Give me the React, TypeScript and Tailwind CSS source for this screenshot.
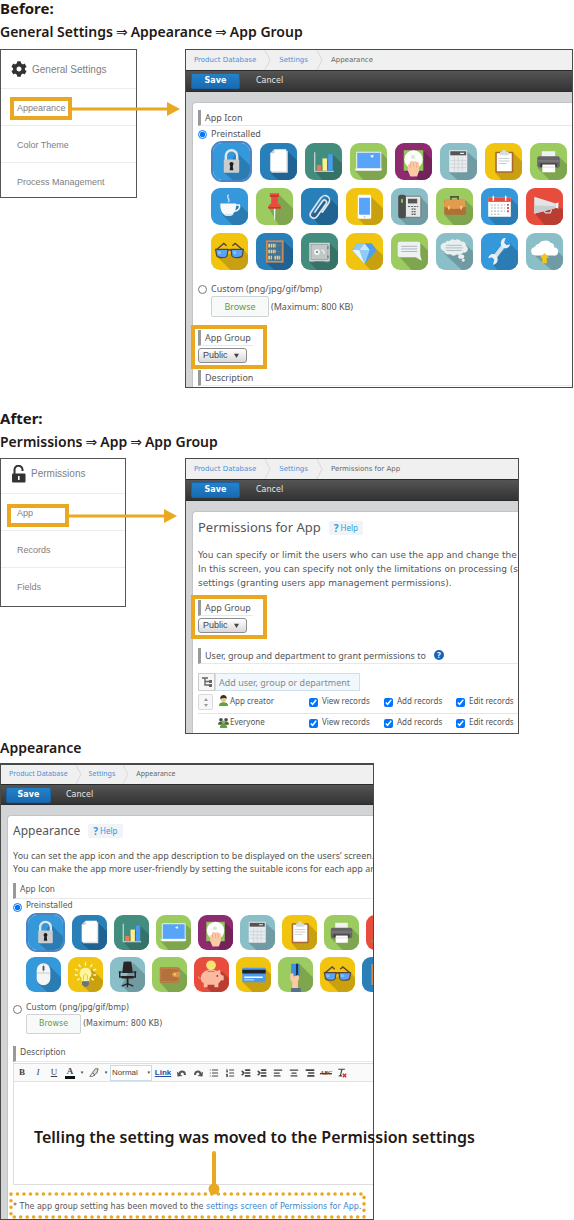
import type { ReactNode } from "react";
import {
  AlignCenter,
  AlignLeft,
  AlignRight,
  IndentDecrease,
  IndentIncrease,
  List,
  ListOrdered,
} from "lucide-react";
import { FaCog } from "react-icons/fa";

type Tile = { bg: string; shade: string; shadow: string; art: ReactNode };

const BLUE = { bg: "#3498db", shade: "#2b7cb3" };
const NAVY = { bg: "#2980b9", shade: "#206392" };
const TEAL = { bg: "#438d7e", shade: "#377268" };
const GREEN = { bg: "#9ccc60", shade: "#7fa64f" };
const PURPLE = { bg: "#8e2a6e", shade: "#74225a" };
const PALE = { bg: "#8bbfc8", shade: "#719ba2" };
const YELLOW = { bg: "#f1c40f", shade: "#c9a00f" };
const RED = { bg: "#e74c3c", shade: "#bb3d31" };

const TILES: Record<string, Tile> = {
  lock: {
    ...BLUE,
    shadow: "23,9 36,22 36,36 19,36 11,29",
    art: (
      <>
        <path d="M12.500 18v-5.500a5.500 5.500 0 0 1 11 0V18" fill="none" stroke="#e3e6e8" strokeWidth="2.400" />
        <rect x="10.500" y="16" width="15" height="13" rx="1" fill="#c9cdd0" />
        <circle cx="18" cy="20.500" r="2" fill="#1d1d1d" />
        <path d="M17 21h2l.8 5.500h-3.600z" fill="#1d1d1d" />
      </>
    ),
  },
  file: {
    ...NAVY,
    shadow: "26,7 36,17 36,36 18,36 10,29",
    art: (
      <>
        <path d="M13.500 7.500H27V29H11z" fill="#dfe3e6" />
        <path d="M14 6h11.500v21.500H10V10z" fill="#fff" />
        <path d="M14 6v4h-4z" fill="#c5ccd1" />
      </>
    ),
  },
  chart: {
    ...TEAL,
    shadow: "27,11 36,20 36,36 17,36 10,28",
    art: (
      <>
        <path d="M9.500 9v18.500H28" fill="none" stroke="#dfe9e7" />
        <rect x="11.500" y="21.500" width="4.500" height="5.500" fill="#f0785a" />
        <rect x="17" y="15" width="4.500" height="12" fill="#fdf08a" />
        <rect x="22.500" y="11" width="4.500" height="16" fill="#4a9bef" />
      </>
    ),
  },
  laptop: {
    ...GREEN,
    shadow: "30,9 36,15 36,36 13,36 5,27",
    art: (
      <>
        <rect x="6" y="8.500" width="24.500" height="17" rx="1" fill="#eef1f2" />
        <rect x="7" y="9.500" width="22.500" height="15" fill="#57a4f8" />
        <path d="M19.500 12.500l3.500-1-1 3z" fill="#fff" />
        <path d="M4.500 25h27l-1.500 2H6z" fill="#fff" />
      </>
    ),
  },
  touch: {
    ...PURPLE,
    shadow: "28,8 36,16 36,36 24,36 9,27",
    art: (
      <>
        <rect x="8.500" y="7" width="19" height="20" fill="#8fc95c" />
        <circle cx="18" cy="16" r="9" fill="#fff" />
        <circle cx="17.500" cy="13.500" r="2" fill="#d9e8d0" />
        <path d="M14.500 18.500q1.700-2.500 3.400 0 2-2 3.400 0 1.800-.8 2.200 1.500V27l-2 5.500h-6.500L12.500 27v-5q0-2 2-1.500z" fill="#fbc9a4" />
        <path d="M15 19v5M18 18.500v5M21 19v5" stroke="#e0a580" strokeWidth=".6" />
      </>
    ),
  },
  calculator: {
    ...PALE,
    shadow: "26,8 36,17 36,36 17,36 9,29",
    art: (
      <>
        <rect x="9" y="7" width="17.500" height="21.500" rx="1" fill="#e9ecee" />
        <rect x="10" y="8" width="15.500" height="4" fill="#555" />
        <path d="M19.500 10h4" stroke="#e9ecee" strokeWidth="1.200" />
        <path d="M14 13.500v14M17.800 13.500v14M21.600 13.500v14M10 17h16M10 20.500h16M10 24h16" stroke="#c9d0d3" strokeWidth=".7" />
      </>
    ),
  },
  clipboard: {
    ...YELLOW,
    shadow: "27,9 36,18 36,36 16,36 10,29",
    art: (
      <>
        <rect x="10" y="8.500" width="17.500" height="20.500" rx="1" fill="#a8672e" />
        <rect x="11.500" y="10" width="14.500" height="17.500" fill="#fff" />
        <path d="M14.500 8.500h2a2 2 0 0 1 4 0h2.500v3.500h-8.500z" fill="#d8dcde" />
        <path d="M13 15h11M13 17.500h11M13 20h8" stroke="#c3c8cc" strokeWidth=".9" />
      </>
    ),
  },
  printer: {
    ...GREEN,
    shadow: "29,14 36,21 36,36 19,36 7,24",
    art: (
      <>
        <rect x="11.500" y="8" width="13" height="6" fill="#f1f1f1" />
        <rect x="7" y="13" width="22" height="11" rx="2" fill="#666" />
        <path d="M7.500 17.500h21" stroke="#8a8a8a" />
        <path d="M10 20h16v3H10z" fill="#333" />
        <path d="M12 21h12.500v7.500H12z" fill="#fff" />
        <path d="M12 23.500h12.500" stroke="#d9d9d9" strokeWidth=".8" />
      </>
    ),
  },
  cup: {
    ...BLUE,
    shadow: "28,16 36,24 36,36 21,36 11,26",
    art: (
      <>
        <path d="M17 6.500q-1.500 2.300 0 4.200t-.5 3" fill="none" stroke="#cfe6f6" strokeWidth="1.200" />
        <path d="M9 15h15.500c0 6-1.500 9.500-4.500 11h-6.500C10.500 24.500 9 21 9 15z" fill="#f7f9fa" />
        <path d="M24 16.500h3.500c1.500 3-1.500 6-5 6" fill="none" stroke="#f0f3f5" strokeWidth="1.600" />
        <path d="M12 25.500h10q-1.500 1.700-3 1.700h-4q-1.500 0-3-1.700z" fill="#dce6ec" />
      </>
    ),
  },
  pin: {
    ...GREEN,
    shadow: "23,7 36,20 36,36 22,36 12,19",
    art: (
      <>
        <path d="M17.300 19h1.600l-.4 12h-.8z" fill="#f3f5f6" />
        <path d="M13.500 5h9v3l-1.300.8v5.700l2.800 3V20H12v-2.500l2.800-3V8.800L13.500 8z" fill="#e74c3c" />
        <path d="M13.500 7h9v1l-1.300.8h-6.400L13.500 8zM12 18.500h12V20H12z" fill="#c0392b" />
      </>
    ),
  },
  paperclip: {
    ...NAVY,
    shadow: "27,9 36,18 36,36 18,36 9,27",
    art: (
      <path
        d="M13.500 23.500l7.300-10.600c1.900-2.700 5.400-.3 3.600 2.400l-8.600 12.200c-3.100 4.300-9 .3-6-4.200l9.400-13.500c4-5.500 11.300-.5 7.500 5.200l-6 8.500"
        fill="none"
        stroke="#dfe5ea"
        strokeWidth="1.600"
        strokeLinecap="round"
      />
    ),
  },
  mobile: {
    ...YELLOW,
    shadow: "24,8 36,20 36,36 18,36 12,30",
    art: (
      <>
        <rect x="11.500" y="6.500" width="13" height="23.500" rx="1.500" fill="#fff" />
        <rect x="12.700" y="9.500" width="10.600" height="16.500" fill="#57a4f8" />
        <circle cx="18" cy="28" r=".9" fill="#c7ccd0" />
      </>
    ),
  },
  phone: {
    ...PALE,
    shadow: "29,9 36,16 36,36 15,36 8,29",
    art: (
      <>
        <rect x="12" y="8" width="17" height="20.500" rx="1" fill="#e6e9ea" stroke="#6b6b6b" strokeWidth=".8" />
        <rect x="7" y="6.500" width="7.500" height="23" rx="2.500" fill="#4d4d4d" />
        <rect x="9.800" y="10.500" width="1.800" height="4" rx=".9" fill="#8bd34e" />
        <rect x="16.500" y="10.500" width="9" height="4.500" fill="#555" />
        <path d="M16.500 18h10" stroke="#666" strokeWidth="1.200" strokeDasharray="2 .8" />
        <path d="M20 20.500h4M20 23h4M20 25.500h4" stroke="#666" strokeWidth="1.300" />
        <path d="M21.900 20v6.500" stroke="#e6e9ea" strokeWidth=".5" />
      </>
    ),
  },
  briefcase: {
    ...GREEN,
    shadow: "29,12 36,19 36,36 17,36 8,26",
    art: (
      <>
        <path d="M14.500 12V8.700h7V12" fill="none" stroke="#5a5040" strokeWidth="1.600" />
        <rect x="8" y="11.500" width="21" height="14.500" rx="1.500" fill="#b06f37" />
        <path d="M8.500 11.500h20l.5 6.500q-5 2.500-10.500 2.500T7.500 18z" fill="#e19c50" />
        <path d="M12.500 17.500v3.500M24.500 17.500v3.500" stroke="#fbd978" strokeWidth="1.500" />
      </>
    ),
  },
  calendar: {
    ...BLUE,
    shadow: "29,10 36,17 36,36 14,36 7,28",
    art: (
      <>
        <rect x="7" y="9.500" width="22" height="18.500" fill="#fff" />
        <rect x="7" y="9.500" width="22" height="4" fill="#e74c3c" />
        <path d="M12 7.500v5M24 7.500v5" stroke="#fff" strokeWidth="1.400" />
        <path d="M9.500 16.500h14M9.500 19.500h14M9.500 22.500h14M9.500 25.500h10" stroke="#c3cdd4" strokeWidth="1.600" strokeDasharray="1.800 1.400" />
        <path d="M26.200 15.500v8.500" stroke="#e74c3c" strokeWidth="1.800" strokeDasharray="1.800 1.300" />
      </>
    ),
  },
  megaphone: {
    ...RED,
    shadow: "32,18 36,21 36,36 18,36 8,24",
    art: (
      <>
        <path d="M8 8.500L29 15v4.500L8 25z" fill="#e2e5e7" />
        <path d="M8 17l21 .5v2L8 25z" fill="#c9ced1" />
        <path d="M29 14.500h1.500l1-1v7l-1-1H29z" fill="#f5f6f7" />
        <path d="M17.500 22.500l1.500 1.700h4.500l1.500-3.400" fill="none" stroke="#d5d9db" strokeWidth="1.200" />
      </>
    ),
  },
  glasses: {
    ...YELLOW,
    shadow: "31,16 36,21 36,36 19,36 7,24",
    art: (
      <>
        <path d="M5 16.500l7.500-6.300 2.700 2.300M31 16.500l-7.500-6.300-2.700 2.300" fill="none" stroke="#5c4433" strokeWidth="1.300" />
        <path d="M4.500 16h12l-.8 6c-1 2.600-8.700 2.600-10.200 0zM19.500 16h12l-1 6c-1.500 2.600-9.200 2.600-10.200 0z" fill="#57a4f8" stroke="#5c4433" strokeWidth="1.200" />
        <path d="M16.500 17q1.500-1.500 3 0" fill="none" stroke="#5c4433" strokeWidth="1.500" />
        <path d="M6.500 18h3v2.500h-2.500zM21.500 18h3v2.500h-2.500z" fill="#8fc4fb" />
      </>
    ),
  },
  abacus: {
    ...NAVY,
    shadow: "27,8 36,16 36,36 18,36 10,29",
    art: (
      <>
        <rect x="10.500" y="8" width="15.500" height="20" fill="#3f7399" stroke="#d08a55" strokeWidth="1.700" />
        <path d="M11.500 12.300h14M11.500 18h14M11.500 24h14" stroke="#a56a3c" strokeWidth=".9" />
        <path d="M12 12.300h7.500M12 18h7.500M12 24h3.500M18 24h5.500" stroke="#f5cf7a" strokeWidth="3.600" strokeDasharray="1.600 .7" />
      </>
    ),
  },
  safe: {
    ...TEAL,
    shadow: "28,10 36,18 36,36 15,36 8,28",
    art: (
      <>
        <path d="M9 27h4v1.500H9zM23 27h4v1.500h-4z" fill="#8b9092" />
        <rect x="8" y="9.500" width="20" height="18" fill="#d0d4d5" />
        <rect x="9.800" y="11.300" width="16.400" height="14.400" fill="#c1c6c7" stroke="#959b9d" strokeWidth=".7" />
        <circle cx="15.500" cy="18.500" r="2.800" fill="#f2f3f3" />
        <path d="M14.800 17.500h1.500v2h-1.500z" fill="#6f7577" />
        <path d="M20 17h1.500l1.500 3.500" fill="none" stroke="#f2f3f3" strokeWidth="1.200" />
        <path d="M26.200 13v2.500M26.200 22v2.500" stroke="#6f7577" strokeWidth="1.200" />
      </>
    ),
  },
  diamond: {
    ...YELLOW,
    shadow: "30,16 36,22 36,36 24,36 18,30",
    art: (
      <>
        <path d="M11 10h14l5 6.500L18.200 30.500 6 16.500z" fill="#4f9fe8" />
        <path d="M11 10h7l-5 6.500H6z" fill="#8cc8f8" />
        <path d="M18 10l5 6.500H13z" fill="#c9e7fd" />
        <path d="M13 16.500h10l-4.800 14z" fill="#8dcdf8" />
        <path d="M6 16.500h7l5.200 14z" fill="#e4f4fe" />
      </>
    ),
  },
  chat: {
    ...GREEN,
    shadow: "29,10 36,17 36,36 20,36 8,23",
    art: (
      <>
        <path d="M8.500 8.500h18a2 2 0 0 1 2 2V22l1.500 5-6-3.500H8.500a2 2 0 0 1-2-2v-11a2 2 0 0 1 2-2z" fill="#eef1f2" />
        <path d="M10 13h15.500M10 15.500h15.500M10 18h15.500" stroke="#aab2b6" strokeWidth=".9" />
      </>
    ),
  },
  thought: {
    ...PALE,
    shadow: "30,12 36,18 36,36 25,36 8,20",
    art: (
      <>
        <path d="M9 9.500a3 3 0 0 1 4-1.500 4 4 0 0 1 5.500-1 4 4 0 0 1 6 1.500 3.500 3.500 0 0 1 4.500 4 3.500 3.500 0 0 1-2.500 6.500 5 5 0 0 1-6 2 6 6 0 0 1-7-.5 4 4 0 0 1-5.500-3 3.500 3.500 0 0 1 1-8z" fill="#e8eff1" />
        <path d="M10 12h15M9 14.500h17M10 17h15" stroke="#a8b7bc" strokeWidth=".9" />
        <ellipse cx="24.500" cy="23" rx="3" ry="2" fill="#e8eff1" />
        <circle cx="26.500" cy="26.500" r="1.400" fill="#e8eff1" />
      </>
    ),
  },
  wrench: {
    ...BLUE,
    shadow: "28,10 36,18 36,36 16,36 11,30",
    art: (
      <>
        <path d="M12.500 24.500L23 11" stroke="#dde1e4" strokeWidth="3.800" />
        <path d="M24 4.500c-4 .5-6 4.500-4 8s7 3.500 8.500-1.500l-3.700.8-2.300-2.300z" fill="#eceff1" />
        <path d="M11.500 31c4-.5 6-4.500 4-8s-7-3.500-8.500 1.500l3.700-.8 2.300 2.300z" fill="#eceff1" />
      </>
    ),
  },
  cloud: {
    ...PALE,
    shadow: "29,16 36,23 36,36 25,36 7,21",
    art: (
      <>
        <path d="M9 22a4.300 4.300 0 0 1-.5-8.500 5 5 0 0 1 4-3 6.500 6.500 0 0 1 5.500-3 6 6 0 0 1 6 2 4.500 4.500 0 0 1 3.500 4.500 4 4 0 0 1-.5 8z" fill="#fff" />
        <path d="M18 19.500l4.500 4.500h-2.300v5.500h-4.400V24h-2.300z" fill="#f5c518" />
      </>
    ),
  },
  mouse: {
    ...BLUE,
    shadow: "24,9 36,21 36,36 22,36 12,27",
    art: (
      <>
        <path d="M11 13.500a7 7 0 0 1 14 0V22a7 7 0 0 1-14 0z" fill="#f3f5f6" />
        <path d="M11 16.500h14M18 6.500v9.500" fill="none" stroke="#b4bdc3" strokeWidth=".7" />
        <rect x="17" y="9" width="2" height="5" rx="1" fill="#555" />
      </>
    ),
  },
  bulb: {
    ...YELLOW,
    shadow: "24,12 36,24 36,36 22,36 15,29",
    art: (
      <>
        <path d="M18 5.500v3.500M11 7.500l2 3M25 7.500l-2 3M7 12.500l3.500 1.500M29 12.500L25.500 14M7 18.500h3M29 18.500h-3M9.500 24l2.500-2M26.500 24L24 22" stroke="#fff6b8" strokeWidth="1.400" />
        <path d="M18 11a6 6 0 0 1 4 10.500V25h-8v-3.500A6 6 0 0 1 18 11z" fill="#fdf7a0" />
        <path d="M16 24v-5l2-1.500 2 1.500v5" fill="none" stroke="#e8b52c" strokeWidth=".8" />
        <path d="M14.500 25h7v3l-2 2.500h-3l-2-2.500z" fill="#6b7379" />
      </>
    ),
  },
  chair: {
    ...PALE,
    shadow: "24,6 36,18 36,36 19,36 12,29",
    art: (
      <>
        <path d="M14 5q4-1 8 0l1.500 11.500h-11z" fill="#2a2525" />
        <path d="M10 15.500v5h16v-5M9 15.500h3M24 15.500h3" fill="none" stroke="#222" strokeWidth="1.500" />
        <path d="M12 19.500h12V22H12zM17.200 22h1.800v6h-1.800z" fill="#222" />
        <path d="M12 30l6-2.500 6 2.500M18 27.500V31" fill="none" stroke="#222" strokeWidth="1.300" />
      </>
    ),
  },
  wallet: {
    ...GREEN,
    shadow: "28,11 36,19 36,36 17,36 8,26",
    art: (
      <>
        <rect x="8" y="10.500" width="20" height="16" rx="1.500" fill="#b5713c" />
        <rect x="9.200" y="11.800" width="17.600" height="13.400" fill="none" stroke="#e0a96f" strokeWidth=".6" strokeDasharray="1 1" />
        <path d="M28.500 15.500H23a2.500 2.500 0 0 0 0 5h5.500z" fill="#d69554" />
        <circle cx="23.500" cy="18" r="1.100" fill="#fbe06a" />
      </>
    ),
  },
  piggy: {
    ...RED,
    shadow: "29,15 36,22 36,36 18,36 10,29",
    art: (
      <>
        <circle cx="17.500" cy="8.500" r="5" fill="#f8e375" />
        <path d="M4.500 19c1 2 1 3 2.500 3 0-6 5-9 10-9 3 0 5 .5 6.500 1.500L27 13v4l2 2h1.500v5H28l-3 3.500V31h-4v-2.500h-7V31h-4v-4c-2-1.500-3-3-3-4.500-2 0-3-1.500-2.500-3.500z" fill="#fbb9a0" />
        <circle cx="24" cy="19.500" r=".9" fill="#7a3d2f" />
        <path d="M14 14.800h7" stroke="#c96d57" />
      </>
    ),
  },
  card: {
    ...YELLOW,
    shadow: "30,12 36,18 36,36 17,36 7,26",
    art: (
      <>
        <rect x="6.500" y="11" width="24" height="15" rx="1" fill="#4a9bef" />
        <path d="M6.500 13h24v4h-24z" fill="#1d2226" />
        <path d="M8.500 20h19v1.500h-19z" fill="#fff" />
        <path d="M8.500 23.500h10" stroke="#d3e7fb" />
      </>
    ),
  },
  pay: {
    ...GREEN,
    shadow: "23,8 36,21 36,36 22,36 14,28",
    art: (
      <>
        <rect x="13.500" y="7" width="9" height="14" fill="#3f8fe0" />
        <path d="M18.500 7h2.200v14h-2.200z" fill="#20324a" />
        <path d="M12.500 17.500l3-1 .8 3.500 4.200-1.500 1.500 2-1.500 5V32h-6v-6l-2-3z" fill="#fbc9a4" />
        <path d="M13.500 32H23.500v4H13.500z" fill="#55708f" />
      </>
    ),
  },
  melon: {
    ...RED,
    shadow: "10,20 36,20 36,36 26,36",
    art: <path d="M5 26l5-3 8 2v3H6z" fill="#6fa04a" />,
  },
};

const GENERAL_ROWS = [
  ["lock", "file", "chart", "laptop", "touch", "calculator", "clipboard", "printer"],
  ["cup", "pin", "paperclip", "mobile", "phone", "briefcase", "calendar", "megaphone"],
  ["glasses", "abacus", "safe", "diamond", "chat", "thought", "wrench", "cloud"],
];

const APPEARANCE_ROWS = [
  ["lock", "file", "chart", "laptop", "touch", "calculator", "clipboard", "printer", "melon"],
  ["mouse", "bulb", "chair", "wallet", "piggy", "card", "pay", "glasses", "abacus"],
];

function TileIcon({ name, compact, selected }: { name: string; compact?: boolean; selected?: boolean }) {
  const tile = TILES[name];
  const size = compact ? "size-[35px]" : "size-[37px]";
  return (
    <button
      aria-label={name}
      className={
        "shrink-0 block overflow-hidden " +
        (selected ? "rounded-[11px] border-2 border-[#4a84c4] " : "rounded-[9px] ")
      }
    >
      <svg viewBox="0 0 36 36" className={size}>
        <rect width="36" height="36" fill={tile.bg} />
        <polygon points={tile.shadow} fill={tile.shade} />
        {tile.art}
      </svg>
    </button>
  );
}

function TileGrid({ rows, compact }: { rows: string[][]; compact?: boolean }) {
  return (
    <div>
      {rows.map((row, i) => (
        <div
          key={i}
          className={
            "flex items-center " +
            (compact ? "gap-[7px] " : "gap-2 ") +
            (i === 1 ? (compact ? "mt-[5px]" : "mt-[6px]") : i > 1 ? "mt-2" : "")
          }
        >
          {row.map((name) => (
            <TileIcon key={name} name={name} compact={compact} selected={name === "lock"} />
          ))}
        </div>
      ))}
    </div>
  );
}

function Chevron() {
  return (
    <svg viewBox="0 0 8 21" preserveAspectRatio="none" className="h-full w-[7px] shrink-0">
      <path d="M1 0l6 10.500L1 21" fill="none" stroke="#d6d6d6" />
    </svg>
  );
}

type WindowProps = { current: string; compact?: boolean; className: string; children: ReactNode };

function AppWindow({ current, compact, className, children }: WindowProps) {
  return (
    <div className={"flex flex-col overflow-hidden border border-[#4a4a4a] bg-[#d3d4d6] whitespace-nowrap text-[#555] " + className}>
      <nav
        className={
          "flex shrink-0 items-center bg-[#f0f0f0] text-[#4a90d9] " +
          (compact
            ? "h-[19px] pl-2 gap-[7px] font-['Noto_Sans',sans-serif] text-[7px]"
            : "h-5 pl-2 gap-2 font-['DejaVu_Sans',sans-serif] text-[7px]")
        }
      >
        <a href="#database">Product Database</a>
        <Chevron />
        <a href="#settings">Settings</a>
        <Chevron />
        <span className="text-[#666]">{current}</span>
      </nav>
      <div
        className={
          "flex shrink-0 items-center border-y border-[#2b2b2b] bg-gradient-to-b from-[#555] to-[#333] pl-[5px] font-['DejaVu_Sans',sans-serif] text-[8px] " +
          (compact ? "h-[21px]" : "h-[22px]")
        }
      >
        <button
          className={
            "h-4 rounded-xs border border-[#1a62a3] bg-gradient-to-b from-[#2482ca] to-[#176bb3] font-bold leading-none text-white " +
            (compact ? "w-[45px]" : "w-[49px]")
          }
        >
          Save
        </button>
        <button className={"leading-none text-[#e8e8e8] " + (compact ? "ml-[15px]" : "ml-4")}>Cancel</button>
      </div>
      <div
        className={
          "ml-[6px] mt-[10px] flex-1 rounded-tl-sm border-l border-t border-[#c3c4c6] bg-white pl-[5px] " +
          (compact
            ? "font-['DejaVu_Sans',sans-serif] text-[8px]"
            : "font-['Noto_Sans',sans-serif] text-[9px]")
        }
      >
        {children}
      </div>
    </div>
  );
}

function FieldTitle({ children, short }: { children: ReactNode; short?: boolean }) {
  return (
    <h4
      className={
        "flex h-4 items-center border-b border-b-[#e8e8e8] border-l-[3px] border-l-[#999] pb-px pl-1 leading-none " +
        (short ? "w-[55px]" : "")
      }
    >
      {children}
    </h4>
  );
}

function HelpLink() {
  return (
    <a
      href="#help"
      className="flex h-[14px] items-center gap-[2px] rounded-xs bg-[#f1f4f6] px-[5px] font-['Noto_Sans',sans-serif] text-[8px] leading-none text-[#3498db]"
    >
      <b className="text-[10px]">?</b>
      Help
    </a>
  );
}

function IconPicker({ rows, compact, name }: { rows: string[][]; compact?: boolean; name: string }) {
  return (
    <>
      <FieldTitle>App Icon</FieldTitle>
      <label className={"flex items-center gap-1 leading-none " + (compact ? "h-[14px]" : "h-[15px]")}>
        <input type="radio" name={name} defaultChecked className="m-0 mt-[2px] size-[9px]" />
        Preinstalled
      </label>
      <div className="pl-[13px]">
        <TileGrid rows={rows} compact={compact} />
      </div>
      <label className={"flex h-3 items-center gap-1 leading-none " + (compact ? "mt-[10px]" : "mt-3")}>
        <input type="radio" name={name} className="m-0 mt-[2px] size-[9px]" />
        Custom (png/jpg/gif/bmp)
      </label>
      <div className={"flex items-center gap-[2px] pl-[13px] " + (compact ? "" : "mt-[2px]")}>
        <button
          className={
            "rounded-xs border border-[#cfd3d4] bg-[#f8f9f9] leading-none text-[#6a9b38] " +
            (compact ? "h-5 w-[55px]" : "h-[21px] w-[58px]")
          }
        >
          Browse
        </button>
        <span>(Maximum: 800 KB)</span>
      </div>
    </>
  );
}

function GroupField({ id }: { id: string }) {
  return (
    <div className="relative w-[75px]">
      <label htmlFor={id}>
        <FieldTitle short>App Group</FieldTitle>
      </label>
      <div className="relative mt-[2px] w-[49px]">
        <select
          id={id}
          className="block h-[15px] w-full appearance-none rounded-[3px] border border-[#8c8c8c] bg-gradient-to-b from-white to-[#d9d9d9] pl-1 font-['Liberation_Sans',sans-serif] text-[9px] leading-none text-[#444]"
        >
          <option>Public</option>
          <option>Private</option>
        </select>
        <svg viewBox="0 0 6 6" className="pointer-events-none absolute right-2 top-[5px] size-[5px]">
          <path d="M0 1h6L3 6z" fill="#444" />
        </svg>
      </div>
      <div className="pointer-events-none absolute -left-[7px] -top-[5px] h-11 w-[76px] border-4 border-[#e9a820]" />
    </div>
  );
}

type SideMenuProps = { icon: ReactNode; title: string; items: string[]; className: string; headClass: string };

function SideMenu({ icon, title, items, className, headClass }: SideMenuProps) {
  return (
    <div className={"border border-[#555] bg-white font-['Liberation_Sans',sans-serif] text-[#808080] " + className}>
      <div className={"flex items-center text-[10px] " + headClass}>
        {icon}
        <span>{title}</span>
      </div>
      {items.map((item) => (
        <a key={item} href="#menu" className="flex h-[37px] items-center border-t border-[#ececec] pl-4 pt-[3px] text-[9px]">
          {item}
        </a>
      ))}
    </div>
  );
}

function Arrow() {
  return (
    <svg viewBox="0 0 108 16" className="h-4 w-[108px] shrink-0">
      <path d="M0 8h98" stroke="#e9a820" strokeWidth="3" />
      <path d="M95 1l13 7-13 7z" fill="#e9a820" />
    </svg>
  );
}

function Callout({ className }: { className: string }) {
  return (
    <div className={"pointer-events-none absolute flex items-center " + className}>
      <div className="h-[23px] w-[62px] shrink-0 border-4 border-[#e9a820]" />
      <Arrow />
    </div>
  );
}

function UnlockIcon() {
  return (
    <svg viewBox="0 0 15 18" className="h-[18px] w-[15px]">
      <path d="M3.500 9V5a4 4 0 0 1 8-.5V6" fill="none" stroke="#333" strokeWidth="2" />
      <rect x="1" y="8.500" width="13.500" height="9" rx="1" fill="#333" />
      <path d="M7 11h1.600v4H7z" fill="#fff" />
    </svg>
  );
}

function PersonIcon() {
  return (
    <svg viewBox="0 0 12 12" className="size-[11px] shrink-0">
      <path d="M1 12c0-3 2-4 5-4s5 1 5 4z" fill="#5aa63a" />
      <circle cx="6" cy="4.500" r="3" fill="#f3c28d" />
      <path d="M2.500 4.500C2 1.500 4 0 6 0s4 1.500 3.500 4.500C8.500 3 5 3 2.500 4.500z" fill="#3d2f26" />
    </svg>
  );
}

function PeopleIcon() {
  return (
    <svg viewBox="0 0 12 12" className="size-[11px] shrink-0">
      <circle cx="3.200" cy="3" r="2" fill="#4c4f47" />
      <circle cx="8.800" cy="3" r="2" fill="#4c4f47" />
      <path d="M0 8.500c0-2.500 1.500-3.500 3.200-3.500h5.600c1.700 0 3.200 1 3.200 3.500z" fill="#4c5f47" />
      <circle cx="6" cy="5.800" r="2" fill="#7fb35c" />
      <path d="M2 12c0-3 1.500-4 4-4s4 1 4 4z" fill="#5aa63a" />
    </svg>
  );
}

function PermissionRow({ who, icon, sortable }: { who: string; icon: ReactNode; sortable?: boolean }) {
  return (
    <tr className="h-[21px] border-b border-[#e4e4e4]">
      <td className="w-5 p-0">
        {sortable && (
          <button
            aria-label="Sort"
            className="flex h-4 w-[15px] flex-col items-center justify-center rounded-xs border border-[#dadada] bg-[#f7f7f7]"
          >
            <svg viewBox="0 0 4 9" className="h-[9px] w-1">
              <path d="M2 0l2 3H0zM2 9l2-3H0z" fill="#999" />
            </svg>
          </button>
        )}
      </td>
      <td className="w-[91px] p-0">
        <span className="flex items-center gap-px pb-[3px]">
          {icon}
          {who}
        </span>
      </td>
      {["View records", "Add records", "Edit records"].map((right, i) => (
        <td key={right} className={"p-0 " + (i === 0 ? "w-[75px]" : i === 1 ? "w-[72px]" : "")}>
          <label className="flex items-center gap-1">
            <input type="checkbox" defaultChecked className="m-0 size-[9px]" />
            <span className="pb-[3px]">{right}</span>
          </label>
        </td>
      ))}
    </tr>
  );
}

function HistoryArrow({ flip }: { flip?: boolean }) {
  return (
    <svg viewBox="0 0 10 8" className={"h-2 w-[10px] " + (flip ? "-scale-x-100" : "")}>
      <path d="M2.500 5C3 1.500 8 1.500 8 6" fill="none" stroke="#555" strokeWidth="2" />
      <path d="M0 2.500l5.500 4.500L.5 7.500z" fill="#555" />
    </svg>
  );
}

function EditorToolbar() {
  const btn = "flex w-4 h-full items-center justify-center leading-none";
  const glyph = "size-[10px]";
  return (
    <div className="flex h-[18px] items-center border-b border-[#e2e2e2] bg-[#fafafa] font-['Liberation_Serif',serif] text-[9px] text-[#444]">
      <button className={btn}><b>B</b></button>
      <button className={btn}><i>I</i></button>
      <button className={btn}><u>U</u></button>
      <button className={btn}>
        <span className="w-[10px] border-b-[3px] border-[#111] font-bold leading-[9px]">A</span>
      </button>
      <span className="w-2 text-center font-['DejaVu_Sans',sans-serif] text-[5px]">▾</span>
      <button aria-label="Marker" className={btn}>
        <svg viewBox="0 0 12 12" className={glyph}>
          <path d="M4.500 5l3-4H11L9.500 6 6 8.500z" fill="#ddd" stroke="#555" />
          <path d="M4 6l3 2.500-3 1.500H1z" fill="#fff" stroke="#555" />
        </svg>
      </button>
      <span className="w-2 text-center font-['DejaVu_Sans',sans-serif] text-[5px]">▾</span>
      <span className="relative">
        <select
          aria-label="Text size"
          className="block h-4 w-[42px] appearance-none border border-[#c9dcea] bg-white pl-px font-['Liberation_Sans',sans-serif] text-[8px] leading-none"
        >
          <option>Normal</option>
          <option>Large</option>
        </select>
        <span className="pointer-events-none absolute right-[2px] top-1 font-['DejaVu_Sans',sans-serif] text-[5px]">▾</span>
      </span>
      <button className="flex h-full w-[22px] items-center justify-center font-['Liberation_Sans',sans-serif] text-[8px] font-bold text-[#1f4fa0] underline">
        Link
      </button>
      <button aria-label="Undo" className={btn}><HistoryArrow /></button>
      <button aria-label="Redo" className={btn}><HistoryArrow flip /></button>
      <button aria-label="Bullets" className={btn}><List className={glyph} strokeWidth={2.5} /></button>
      <button aria-label="Numbers" className={btn}><ListOrdered className={glyph} strokeWidth={2.5} /></button>
      <button aria-label="Indent" className={btn}><IndentIncrease className={glyph} strokeWidth={4} /></button>
      <button aria-label="Outdent" className={btn}><IndentIncrease className={glyph} strokeWidth={4} /></button>
      <button aria-label="Left" className={btn}><AlignLeft className={glyph} strokeWidth={3} /></button>
      <button aria-label="Center" className={btn}><AlignCenter className={glyph} strokeWidth={3} /></button>
      <button aria-label="Right" className={btn}><AlignRight className={glyph} strokeWidth={4} /></button>
      <button className={btn + " text-[6px] font-bold italic line-through"}>ABC</button>
      <button aria-label="Clear" className={btn}>
        <svg viewBox="0 0 12 12" className={glyph}>
          <path d="M1.500 1.500h8M6 1.500l-2 8M2 9.500h4" fill="none" stroke="#444" strokeWidth="1.400" />
          <path d="M7 7l4 4M11 7l-4 4" stroke="#d0342c" strokeWidth="1.800" />
        </svg>
      </button>
    </div>
  );
}

function Trail({ steps }: { steps: string[] }) {
  return (
    <h3 className="flex h-5 items-center gap-[3px] text-[14px] font-semibold leading-none">
      {steps.map((step, i) => (
        <span key={step} className="flex items-center gap-[3px]">
          {i > 0 && <span className="font-['DejaVu_Sans',sans-serif] font-normal">⇒</span>}
          {step}
        </span>
      ))}
    </h3>
  );
}

export default function App() {
  return (
    <main className="bg-white font-['Noto_Sans',sans-serif] text-[#231815]">
      <section className="h-[388px]">
        <h2 className="h-[17px] text-[15px] font-bold leading-[17px]">Before:</h2>
        <div className="pt-[5px]">
          <Trail steps={["General Settings", "Appearance", "App Group"]} />
        </div>
        <div className="relative mt-[7px] flex items-start">
          <div className="w-[185px] shrink-0">
            <SideMenu
              icon={<FaCog className="size-4 text-[#333]" />}
              title="General Settings"
              items={["Appearance", "Color Theme", "Process Management"]}
              className="h-[149px] w-[137px]"
              headClass="h-[38px] gap-[5px] pl-[10px]"
            />
          </div>
          <AppWindow current="Appearance" className="mr-px h-[339px] flex-1">
            <div className="pt-[7px]">
              <IconPicker rows={GENERAL_ROWS} name="general-icon" />
            </div>
            <div className="mt-[13px]">
              <GroupField id="general-group" />
            </div>
            <div className="mt-[7px]">
              <FieldTitle>Description</FieldTitle>
            </div>
          </AppWindow>
          <Callout className="left-[10px] top-12" />
        </div>
      </section>

      <section className="pt-[22px]">
        <h2 className="h-[17px] text-[15px] font-bold leading-[17px]">After:</h2>
        <div className="pt-[5px]">
          <Trail steps={["Permissions", "App", "App Group"]} />
        </div>
        <div className="relative mt-[6px] flex items-start">
          <div className="w-[185px] shrink-0">
            <SideMenu
              icon={<UnlockIcon />}
              title="Permissions"
              items={["App", "Records", "Fields"]}
              className="h-[149px] w-[126px]"
              headClass="h-[34px] gap-[5px] pb-[5px] pl-[10px]"
            />
          </div>
          <AppWindow current="Permissions for App" className="h-[276px] max-w-[334px] flex-1">
            <div className="flex items-center gap-2 pt-[7px]">
              <h3 className="text-[13px] leading-[17px]">Permissions for App</h3>
              <HelpLink />
            </div>
            <p className="mt-3 font-['DejaVu_Sans',sans-serif] leading-[14px]">
              You can specify or limit the users who can use the app and change the
              <br />
              In this screen, you can specify not only the limitations on processing (s
              <br />
              settings (granting users app management permissions).
            </p>
            <div className="mt-[10px]">
              <GroupField id="permission-group" />
            </div>
            <div className="mt-[15px]">
              <FieldTitle>
                User, group and department to grant permissions to
                <span className="ml-2 flex size-[10px] items-center justify-center rounded-full bg-[#1763b5] text-[8px] font-bold text-white">
                  ?
                </span>
              </FieldTitle>
            </div>
            <div className="mt-[9px] flex">
              <button aria-label="Organization" className="flex h-[18px] w-[17px] items-center justify-center border border-[#ccc] bg-[#f7f7f7]">
                <svg viewBox="0 0 10 10" className="size-[10px]">
                  <path d="M0 1h6M3 1v7h4M3 4.500h4" fill="none" stroke="#666" strokeWidth="1.400" />
                  <path d="M7 3h3v3H7zM7 7h3v3H7z" fill="#666" />
                </svg>
              </button>
              <input
                aria-label="Add user, group or department"
                placeholder="Add user, group or department"
                className="h-[18px] w-[145px] border border-[#cfe0ea] bg-[#f0f8fe] pl-[3px] text-[9px] placeholder:text-[#888]"
              />
            </div>
            <table className="mt-px w-[330px] table-fixed border-collapse text-[8px] leading-none">
              <tbody>
                <PermissionRow who="App creator" icon={<PersonIcon />} sortable />
                <PermissionRow who="Everyone" icon={<PeopleIcon />} />
              </tbody>
            </table>
          </AppWindow>
          <Callout className="left-[7px] top-[46px]" />
        </div>
      </section>

      <section className="pt-[5px]">
        <h2 className="h-[18px] text-[14px] font-semibold leading-[18px]">Appearance</h2>
        <div className="relative mt-[6px]">
          <AppWindow current="Appearance" compact className="h-[457px] w-full max-w-[374px] border-t-2">
            <div className="flex items-center gap-2 pt-[7px]">
              <h3 className="font-['Noto_Sans',sans-serif] text-[12px] leading-4">Appearance</h3>
              <HelpLink />
            </div>
            <p className="mt-[10px] font-['Noto_Sans',sans-serif] text-[9px] leading-[13px]">
              You can set the app icon and the app description to be displayed on the users’ screen.
              <br />
              You can make the app more user-friendly by setting the suitable icons for each app ar
            </p>
            <div className="mt-2">
              <IconPicker rows={APPEARANCE_ROWS} name="appearance-icon" compact />
            </div>
            <div className="mt-3">
              <FieldTitle>Description</FieldTitle>
            </div>
            <div className="mt-px border-y border-l border-[#ddd]">
              <EditorToolbar />
              <textarea aria-label="Description" className="block h-[102px] w-full resize-none" />
            </div>
            <p className="mt-[8px] flex h-[27px] items-center">
              <span>
                * The app group setting has been moved to the{" "}
                <a href="#permissions" className="text-[#3a87d0]">settings screen of Permissions for App</a>.
              </span>
            </p>
          </AppWindow>
          {/* note pointing at the moved setting */}
          <svg viewBox="0 0 360 72" className="pointer-events-none absolute bottom-0 left-[8px] h-[72px] w-[360px]">
            <path d="M206 5v36" stroke="#e9a820" strokeWidth="4" strokeLinecap="round" />
            <circle cx="206" cy="41" r="5.500" fill="#e9a820" />
            <rect x="3" y="46" width="353" height="23" fill="none" stroke="#e9a820" strokeWidth="3.600" strokeLinecap="round" strokeDasharray="0 6.480" />
          </svg>
          <p className="absolute bottom-[73px] left-[34px] whitespace-nowrap text-[16px] font-semibold leading-5">
            Telling the setting was moved to the Permission settings
          </p>
        </div>
      </section>
    </main>
  );
}
